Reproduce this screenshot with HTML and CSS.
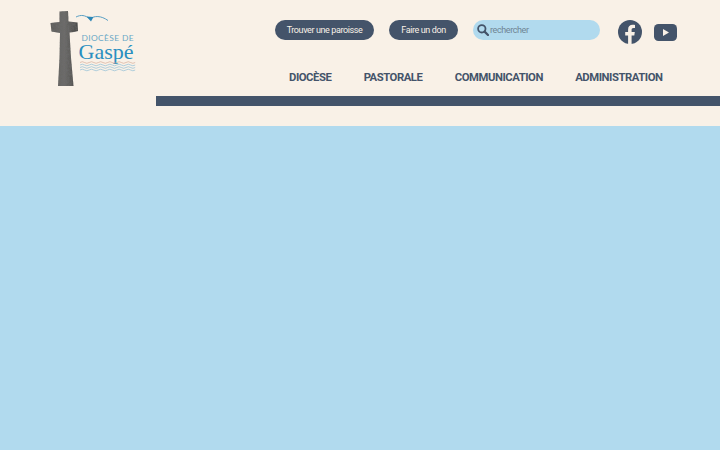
FILE: index.html
```html
<!DOCTYPE html>
<html lang="fr">
<head>
<meta charset="utf-8">
<title>Diocèse de Gaspé</title>
<link rel="stylesheet" href="styles.css">
</head>
<body>
<header class="header">
  <a class="logo" href="#" aria-label="Diocèse de Gaspé">
    <svg class="logo-svg" width="155" height="126" viewBox="0 0 155 126">
      <defs>
        <linearGradient id="stone" x1="0" x2="1" y1="0" y2="0">
          <stop offset="0" stop-color="#5c5b59"/>
          <stop offset="0.5" stop-color="#6d6c6a"/>
          <stop offset="1" stop-color="#4a4947"/>
        </linearGradient>
        <filter id="grain" x="0" y="0" width="100%" height="100%">
          <feTurbulence type="fractalNoise" baseFrequency="0.5" numOctaves="2" seed="4" result="n"/>
          <feColorMatrix in="n" type="matrix" values="0 0 0 0 0.15  0 0 0 0 0.15  0 0 0 0 0.15  0 0 0 1.6 -0.55" result="d"/>
          <feComposite in="d" in2="SourceAlpha" operator="in" result="t"/>
          <feMerge><feMergeNode in="SourceGraphic"/><feMergeNode in="t"/></feMerge>
        </filter>
      </defs>
      <path d="M59.500 11.500 L68 11 L68.500 21.500 L77.500 22.500 L78 31 L74 32 L69.500 32.500 L71 58 L73.500 86 L58 86 L59.500 58 L60 33 L51.500 31.500 L50.500 23 L59.500 22 Z" fill="url(#stone)" filter="url(#grain)"/>
      <path d="M76 17 C81 14.500 85 15 90 19 C94 15.500 101 15.500 108 20.500" fill="none" stroke="#5aa0c4" stroke-width="1"/>
      <path d="M86.500 16.500 L91 21.500 L93.500 17 Z" fill="#2b86b6"/>
      <text class="logo-small" x="81.500" y="41">DIOCÈSE DE</text>
      <text class="logo-big" x="78.500" y="59">Gaspé</text>
      <path d="M80 62.500 q2.300 -1.600 4.600 0 t4.600 0 t4.600 0 t4.600 0 t4.600 0 t4.600 0 t4.600 0 t4.600 0 t4.600 0 t4.600 0 t4.600 0 t4.600 0" fill="none" stroke="#d0a18c" stroke-width="0.600"/>
      <path d="M80 65 q2.300 -1.600 4.600 0 t4.600 0 t4.600 0 t4.600 0 t4.600 0 t4.600 0 t4.600 0 t4.600 0 t4.600 0 t4.600 0 t4.600 0 t4.600 0" fill="none" stroke="#7db6d2" stroke-width="0.600"/>
      <path d="M80 67.500 q2.300 -1.600 4.600 0 t4.600 0 t4.600 0 t4.600 0 t4.600 0 t4.600 0 t4.600 0 t4.600 0 t4.600 0 t4.600 0 t4.600 0 t4.600 0" fill="none" stroke="#7db6d2" stroke-width="0.600"/>
      <path d="M80 70 q2.300 -1.600 4.600 0 t4.600 0 t4.600 0 t4.600 0 t4.600 0 t4.600 0 t4.600 0 t4.600 0 t4.600 0 t4.600 0 t4.600 0 t4.600 0" fill="none" stroke="#7db6d2" stroke-width="0.600"/>
    </svg>
  </a>
  <div class="main">
    <div class="tools">
      <a class="pill pill-parish" href="#">Trouver une paroisse</a>
      <a class="pill pill-don" href="#">Faire un don</a>
      <div class="search">
        <svg width="12" height="12" viewBox="0 0 12 12" aria-hidden="true">
          <circle cx="4.800" cy="4.800" r="3.700" fill="none" stroke="#44546a" stroke-width="1.800"/>
          <path d="M7.600 7.600 L11 11" stroke="#44546a" stroke-width="2.200" stroke-linecap="round"/>
        </svg>
        <span class="search-text">rechercher</span>
      </div>
      <a class="social-fb" href="#" aria-label="Facebook">
        <svg width="24" height="24" viewBox="0 0 24 24">
          <circle cx="12" cy="12" r="12" fill="#44546a"/>
          <path d="M10.100 24 V15.500 H7.200 V12 H10.100 V9.400 C10.100 6.400 11.900 4.800 14.600 4.800 C15.900 4.800 17 5 17 5 V8 H15.500 C14 8 13.600 8.900 13.600 9.800 V12 H16.800 L16.300 15.500 H13.600 V24 Z" fill="#f9f1e7"/>
        </svg>
      </a>
      <a class="social-yt" href="#" aria-label="YouTube">
        <svg width="23" height="17" viewBox="0 0 23 17">
          <rect width="23" height="17" rx="4.500" fill="#44546a"/>
          <path d="M9 5 L15 8.500 L9 12 Z" fill="#f9f1e7"/>
        </svg>
      </a>
    </div>
    <nav class="nav">
      <a href="#">DIOCÈSE</a>
      <a href="#">PASTORALE</a>
      <a href="#">COMMUNICATION</a>
      <a href="#">ADMINISTRATION</a>
    </nav>
    <div class="bar"></div>
  </div>
</header>
<main class="content"></main>
</body>
</html>
```

FILE: styles.css
```css
* { box-sizing: border-box; }
html, body { margin: 0; height: 100%; }
body {
  display: flex;
  flex-direction: column;
  background: #b1daee;
  font-family: "Roboto", "Open Sans", sans-serif;
  overflow: hidden;
}
a { text-decoration: none; color: inherit; }

.header {
  display: flex;
  height: 126px;
  background: #f9f1e7;
  flex: none;
}
.logo { width: 155.5px; flex: none; display: block; }
.logo-svg { display: block; }
.logo-small {
  font-family: "Lato", sans-serif;
  font-size: 8.4px;
  letter-spacing: 0.4px;
  fill: #6aa8c6;
}
.logo-big {
  font-family: "Liberation Serif", serif;
  font-size: 22px;
  fill: #2a8fc0;
}

.main { flex: 1; display: flex; flex-direction: column; min-width: 0; }
.tools {
  display: flex;
  align-items: flex-start;
  height: 64px;
  padding: 20px 0 0 119.500px;
}
.pill {
  display: flex;
  align-items: center;
  justify-content: center;
  height: 20px;
  border-radius: 10px;
  background: #44546a;
  color: #f9f1e7;
  font-size: 9px;
  letter-spacing: -0.4px;
}
.pill-parish { width: 99px; margin-right: 15px; }
.pill-don { width: 69px; margin-right: 15px; }
.search {
  display: flex;
  align-items: center;
  gap: 1px;
  width: 127px;
  height: 20px;
  margin-right: 18px;
  padding-left: 4px;
  border-radius: 10px;
  background: #b1daee;
}
.search-text { color: #6f8494; font-size: 9px; letter-spacing: -0.4px; }
.social-fb { display: block; height: 24px; margin-right: 12px; }
.social-yt { display: block; height: 17px; margin-top: 4px; }
.social-fb svg, .social-yt svg { display: block; }

.nav {
  display: flex;
  gap: 32.300px;
  height: 32px;
  padding: 7px 0 0 133.500px;
  color: #44546a;
  font-size: 11.300px;
  font-weight: 700;
  letter-spacing: -0.45px;
  line-height: 14px;
}
.bar { height: 10px; background: #44546a; flex: none; }
.content { flex: 1; background: #b1daee; }
```
